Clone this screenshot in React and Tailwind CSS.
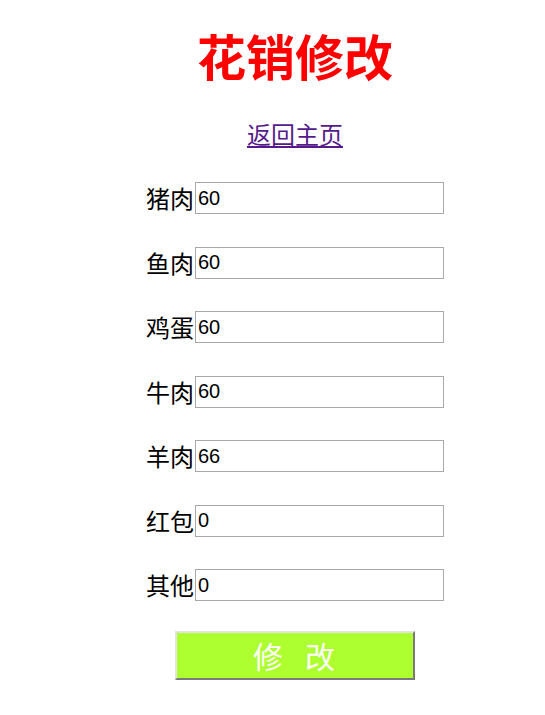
const items = [
  ['猪肉', '60'],
  ['鱼肉', '60'],
  ['鸡蛋', '60'],
  ['牛肉', '60'],
  ['羊肉', '66'],
  ['红包', '0'],
  ['其他', '0'],
];

const cjk = { fontFamily: '"Noto Sans CJK SC", "Liberation Sans", sans-serif' };

export default function App() {
  return (
    <div className="min-h-screen bg-white pl-[45px] flex flex-col items-center text-black" style={cjk}>
      <h1 className="mt-[25px] text-[49px] leading-[60px] font-bold text-[#ff0000]">花销修改</h1>
      <a href="#" className="mt-[33px] text-[24px] leading-[32px] text-[#551a8b] underline">返回主页</a>
      <form className="mt-[32px] flex flex-col gap-[32.5px]">
        {items.map(([label, value]) => (
          <div key={label} className="flex items-center">
            <span className="text-[24px] leading-[32px] mr-px">{label}</span>
            <input
              defaultValue={value}
              className="w-[249px] h-[32px] border border-[#a9a9a9] px-[2px] text-[20px] outline-none"
              style={{ fontFamily: '"Liberation Sans", sans-serif' }}
            />
          </div>
        ))}
        <button
          type="button"
          className="self-center mt-[-3px] w-[240px] h-[49px] bg-[#adff2f] text-white text-[30px] tracking-[22px] pl-[20px] border-2 border-t-[#e3e3e3] border-l-[#e3e3e3] border-b-[#7a7a7a] border-r-[#7a7a7a]"
        >
          修改
        </button>
      </form>
    </div>
  );
}
